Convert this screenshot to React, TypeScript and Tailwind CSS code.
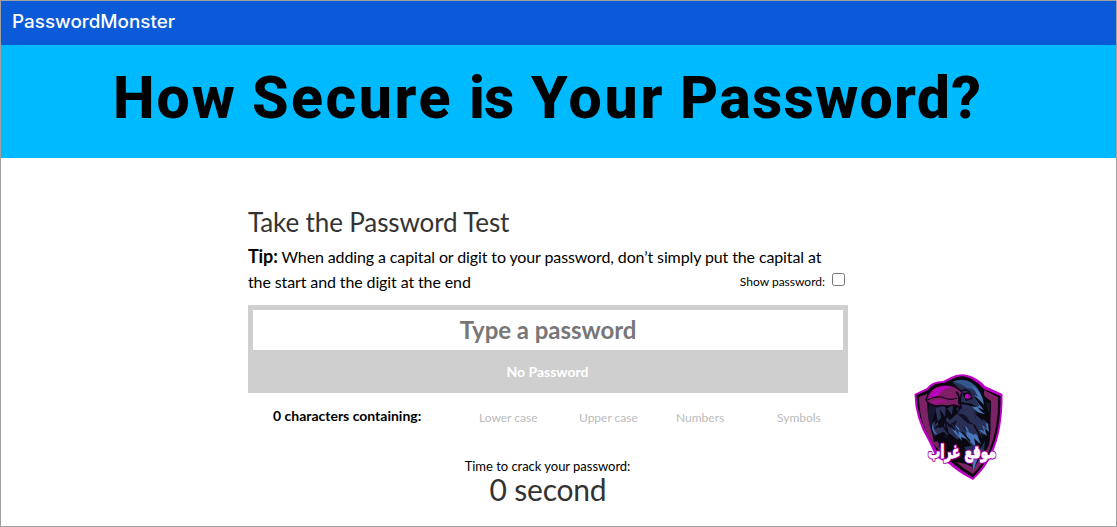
import React from "react";

function RavenShield() {
  return (
    <svg viewBox="0 0 120 120" className="block h-[120px] w-[120px] overflow-visible" aria-label="موقع غراب">
      {/* shield rims */}
      <path d="M14.5 29 L27 23 Q32 16 43 16 L51 12 Q62 6 75 13 Q82 17 85 21 L102.500 29 Q103 65 92 89 Q86 103 73 115 Q59 108 49 99 L36 92 L29 77 Q14.500 53 14.500 29Z" fill="#c000c6" />
      <path d="M16.500 30 L28 25 Q34 17 44 18 L52 14 Q62 8 73 15 Q80 19 84 24 L100.500 31 Q101 65 90 88 Q84 101 73 112.500 Q60 105 50 96 L38 88 L31 75 Q16.500 52 16.500 30Z" fill="#09060e" />
      <path d="M19 32 L27 29 L27 37 Q27 60 39 79 L44 90 L36 82 Q19 61 19 32Z" fill="#7c2366" />
      <path d="M84 25 L98 32 Q99 62 89 86 Q84 98 73 109 Q64 104 56 97 L66 99 L74 103 Q92 76 91 36 L84 31Z" fill="#7c2366" />
      <path d="M29 39 L39 42 L36 52 L32 68 Q26 53 29 39Z M86 37 L90 38 Q90 55 87 62Z" fill="#181530" />
      {/* raven silhouette */}
      <path d="M45 18 Q60 8 74 16 Q86 25 87 43 Q93 54 89 80 L82 93 L77 90 L74 105 L66 86 L38 82 L43 75 L34 77 L31 64 L34 50 L39 40 L52 35 L53 26Z" fill="#090810" />
      <path d="M53 18 Q65 12 73 19 Q83 27 84 40 Q78 32 72 28 Q77 35 80 46 Q74 38 67 38 L61 37 L62 26Z" fill="#293157" />
      <path d="M52 17 Q63 12 72 18 Q79 23 81 31 Q74 23 67 23 Q61 18 52 17Z" fill="#34578c" />
      <path d="M70 20 Q82 25 84 40 Q78 33 73 30 Q78 39 84 45 L77 42 Q81 47 85 49 Q76 48 71 41 Q77 43 79 41 Q76 35 73 30 Q76 30 78 32 Q75 24 70 20Z" fill="#4879bd" />
      <path d="M60 26 Q65 21 72 28 L66 26Z" fill="#100e20" />
      {/* feather layers */}
      <path d="M36 43 L44 40 L46 44 L53 40 L54 45 L62 39 Q74 39 77 50 L72 45 L79 55 L86 64 L82 73 L78 66 L79 79 L71 70 L74 83 L65 73 L60 70 L58 75 L49 68 L46 73 L43 67 L34 71 L32 61 L36 54Z" fill="#2b3057" />
      <path d="M36 47 L35 60 L41 53 L40 44 L45 52 L46 42 L52 50 L53 40 L59 47 L57 37 L62 41 L58 48 L50 55 L47 52 L43 62 L39 63 Z" fill="#0a0915" />
      <path d="M57 49 Q66 47 70 57 L75 60 Q66 59 61 52Z M47 61 L57 55 L55 61 L67 63 L63 69 L56 64Z M74 50 L84 60 L78 58Z" fill="#111126" />
      <path d="M34 56 Q31 64 38 70 L34 68 Q30 63 34 56Z M50 60 L59 68 L55 60 L67 68 L65 61 L77 70 L81 79 L74 73 L76 83 L69 75 L61 72 L62 76 L54 67Z" fill="#4776b9" />
      <path d="M51 58 L60 66 L57 58 L69 67 L66 60 L76 68 L74 70 L65 65 L67 71 L58 66 L59 71Z" fill="#263057" />
      <path d="M77 52 L85 59 L83 55 L91 61 L88 59 L89 67 L84 62 L87 71 L79 65 L84 65Z" fill="#4776b9" />
      <path d="M75 49 L84 57 L82 53 L89 59 L86 58 L87 64 L82 60 L84 67 L77 61Z" fill="#293158" />
      <path d="M35 63 L42 59 L48 68 L45 56 L55 65 M36 71 L44 68 L50 76 L48 69 M62 67 L70 76 M74 60 L79 69 M81 69 L86 75" fill="none" stroke="#0b0a19" strokeWidth="1.6" />
      <path d="M64 82 L75 80 L80 84 L85 76 L84 86 L77 95 L73 107 L70 91Z" fill="#243157" />
      <path d="M73 94 L77 82 L76 92 L82 83 L76 98 L73 107Z" fill="#4878bd" />
      {/* beak and eye */}
      <path d="M26 35 Q30 21 43 20 Q54 19 62 27 L59 36 L61 43 Q55 38 49 41 Q42 40 36 41 Q28 39 26 35Z" fill="#801f68" stroke="#160019" strokeWidth="1.3" />
      <path d="M28 34 Q32 22 44 21 Q50 21 54 23 Q45 22 40 28 Q37 32 28 34Z" fill="#b900bd" />
      <path d="M27 35 Q35 31 42 32 Q50 36 57 33" fill="none" stroke="#18001c" strokeWidth="1.2" />
      <path d="M30 37 Q40 33 48 37 Q40 36 35 39" fill="#a51096" />
      <path d="M56 27 Q60 29 59 39" fill="none" stroke="#0d0919" strokeWidth="2" />
      <path d="M62 28 L70 27 L73 34 L66 36Z" fill="#13081c" />
      <path d="M65 30 Q69 27 71 32 Q69 35 65 33Z" fill="#cc00cc" />
      <circle cx="68.500" cy="31.500" r="1" fill="#651057" />
      <text x="62" y="93" textAnchor="middle" className="font-['DejaVu_Sans',sans-serif] text-[18px] font-bold" fill="#a000a8" stroke="#a000a8" strokeWidth="3.2" strokeLinejoin="round" textLength="68" lengthAdjust="spacingAndGlyphs" aria-hidden="true">موقع غراب</text>
      <text x="62" y="93" textAnchor="middle" className="font-['DejaVu_Sans',sans-serif] text-[18px] font-bold" fill="white" stroke="white" strokeWidth="0.8" textLength="68" lengthAdjust="spacingAndGlyphs">موقع غراب</text>
    </svg>
  );
}

export default function App() {
  return (
    <main className="relative h-[527px] w-[1117px] overflow-hidden border border-[#a0a0a0] bg-white font-['Lato',sans-serif] text-black">
      <header className="h-11 bg-[#0b5ad8] pl-[11px] pt-[8px] text-white">
        <div className="w-fit origin-left scale-x-[1.048] font-['Inter',sans-serif] text-[18px] leading-[26px] font-medium">PasswordMonster</div>
      </header>
      <section className="h-[113px] bg-[#00baff] pl-[112px] pt-[17px]">
        <h1 className="flex font-['Roboto',sans-serif] text-[59px] leading-[72px] font-extrabold whitespace-nowrap">
          <span className="w-[139px] tracking-[2px]">How</span>
          <span className="w-[217px] tracking-[2.5px]">Secure</span>
          <span className="w-[62px] tracking-[-1px]">is</span>
          <span className="w-[149px] tracking-[2.7px]">Your</span>
          <span className="tracking-[1.3px]">Password?</span>
        </h1>
      </section>
      <section className="ml-[247px] w-[600px] pt-[46px]">
        <h2 className="text-[26px] leading-[36px] tracking-[-0.12px] text-[#333]">Take the Password Test</h2>
        <div className="flex h-[65px] text-[16px] leading-[25px]">
          <p className="w-0 shrink-0 whitespace-nowrap pt-[4px] tracking-[-0.115px]"><strong className="text-[18px]">Tip:</strong> When adding a capital or digit to your password, don’t simply put the capital at<br />the start and the digit at the end</p>
          <label className="ml-auto mr-[3px] flex items-center self-start pt-[32px] text-[12px] leading-[20px]">Show password:<input type="checkbox" className="mb-[5px] ml-[7px] h-[13px] w-[13px]" /></label>
        </div>
        <div className="h-[88px] bg-[#cfcfcf] p-[5px]">
          <input className="block h-10 w-full bg-white pb-[2px] text-center text-[24px] font-bold tracking-[-0.05px] placeholder:text-[#777]" placeholder="Type a password" />
          <div className="pt-[11px] pr-px text-center text-[14px] leading-[22px] font-bold text-white">No Password</div>
        </div>
        <div className="flex h-[61px] pt-[12px] text-[12px] leading-[26px] text-[#bbb]">
          <strong className="w-[206px] pl-[25px] text-[14px] leading-[22px] text-black">0 characters containing:</strong>
          <span className="ml-[25px] w-[100px]">Lower case</span><span className="w-[97px]">Upper case</span><span className="w-[101px]">Numbers</span><span>Symbols</span>
        </div>
        <div className="text-center"><p className="pt-px pr-px text-[13px] leading-[23px] tracking-[-0.03px]">Time to crack your password:</p><p className="text-[30px] leading-[22px] tracking-[-0.2px] text-[#333]">0 second</p></div>
      </section>
      <div className="absolute left-[899px] top-[364px]"><RavenShield /></div>
    </main>
  );
}
